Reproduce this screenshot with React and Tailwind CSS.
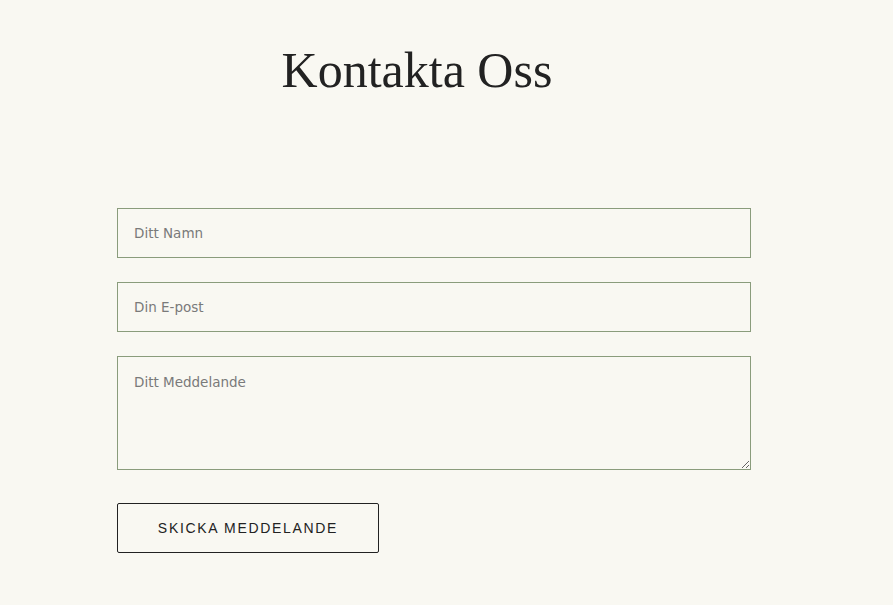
import React from 'react';

const App = () => {
    return (
        <div className="min-h-[605px] w-full bg-[#f9f8f2] pt-[38px]">
            {/* Rubrik */}
            <div className="ml-[117px] w-[600px] text-center">
                <h1
                    className="text-[50px] leading-[64px] text-[#222222]"
                    style={{ fontFamily: '"Liberation Serif", "DejaVu Serif", serif' }}
                >
                    Kontakta Oss
                </h1>
            </div>

            {/* Formulär */}
            <form
                className="ml-[117px] mt-[106px] flex w-[634px] flex-col gap-6"
                style={{ fontFamily: '"DejaVu Sans", "Noto Sans", sans-serif' }}
                onSubmit={(e) => e.preventDefault()}
            >
                <input
                    type="text"
                    placeholder="Ditt Namn"
                    className="h-[50px] w-full border border-[#8a9c7c] bg-transparent px-4 text-[13.5px] text-[#333] outline-none placeholder:text-[#7a7a7a]"
                />
                <input
                    type="email"
                    placeholder="Din E-post"
                    className="h-[50px] w-full border border-[#8a9c7c] bg-transparent px-4 text-[13.5px] text-[#333] outline-none placeholder:text-[#7a7a7a]"
                />
                <textarea
                    placeholder="Ditt Meddelande"
                    className="h-[114px] w-full border border-[#8a9c7c] bg-transparent px-4 pt-[15px] text-[13.5px] text-[#333] outline-none placeholder:text-[#7a7a7a]"
                />
                <div className="pt-[9px]">
                    <button
                        type="submit"
                        className="h-[50px] w-[262px] rounded-[2px] border border-[#222] bg-transparent text-[14px] tracking-[0.12em] text-[#222]"
                        style={{ fontFamily: '"Liberation Sans", Arial, sans-serif' }}
                    >
                        SKICKA MEDDELANDE
                    </button>
                </div>
            </form>
        </div>
    );
};

export default App;
